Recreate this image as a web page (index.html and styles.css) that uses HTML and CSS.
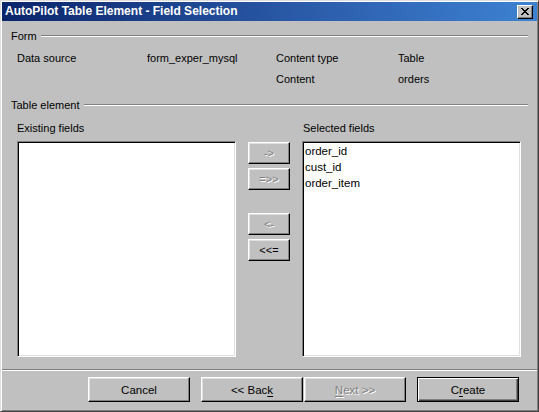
FILE: index.html
```html
<!DOCTYPE html>
<html>
<head>
<meta charset="utf-8">
<title>AutoPilot Table Element - Field Selection</title>
<link rel="stylesheet" href="styles.css">
</head>
<body>
<div class="window">
  <div class="titlebar">
    <span class="title">AutoPilot Table Element - Field Selection</span>
    <span class="close-btn">
      <svg width="8" height="7" viewBox="0 0 8 7"><path d="M0 0h2v1h-2zM6 0h2v1h-2zM1 1h2v1h-2zM5 1h2v1h-2zM2 2h4v1h-4zM3 3h2v1h-2zM2 4h4v1h-4zM1 5h2v1h-2zM5 5h2v1h-2zM0 6h2v1h-2zM6 6h2v1h-2z" fill="#000"/></svg>
    </span>
  </div>
  <div class="body">
    <div class="group-head"><span>Form</span><span class="rule"></span></div>
    <div class="info">
      <span>Data source</span><span>form_exper_mysql</span><span>Content type</span><span>Table</span>
      <span></span><span></span><span>Content</span><span>orders</span>
    </div>
    <div class="group-head group-head-2"><span>Table element</span><span class="rule"></span></div>
    <div class="fields">
      <span class="flabel">Existing fields</span>
      <span></span>
      <span class="flabel flabel-r">Selected fields</span>
      <div class="listbox"></div>
      <div class="movers">
        <div class="pair">
          <span class="btn small disabled">-&gt;</span>
          <span class="btn small disabled">=&gt;&gt;</span>
        </div>
        <div class="pair">
          <span class="btn small disabled">&lt;-</span>
          <span class="btn small">&lt;&lt;=</span>
        </div>
      </div>
      <div class="listbox">
        <div class="item">order_id</div>
        <div class="item">cust_id</div>
        <div class="item">order_item</div>
      </div>
    </div>
  </div>
  <div class="separator"></div>
  <div class="footer">
    <span class="btn big">Cancel</span>
    <span class="btn big back">&lt;&lt; Bac<u>k</u></span>
    <span class="btn big disabled"><u>N</u>ext &gt;&gt;</span>
    <span class="btn big default">C<u>r</u>eate</span>
  </div>
</div>
</body>
</html>
```
FILE: styles.css
```css
html, body {
  margin: 0;
  padding: 0;
}
body {
  width: 539px;
  height: 412px;
  background: #c0c0c0;
  font-family: "Liberation Sans", Arial, sans-serif;
  font-size: 11px;
  color: #000;
  overflow: hidden;
}
.window {
  box-sizing: border-box;
  width: 539px;
  height: 412px;
  border: 1px solid;
  border-color: #dfdfdf #404040 #404040 #dfdfdf;
  box-shadow: inset 1px 1px #fff, inset -1px -1px #808080;
  padding: 1px 1px 2px 1px;
  background: #c0c0c0;
  display: flex;
  flex-direction: column;
}
.titlebar {
  height: 19px;
  flex: none;
  display: flex;
  align-items: center;
  justify-content: space-between;
  padding: 0 4px 0 3px;
  background: linear-gradient(to right, #0a246a 0%, #2a5aa8 55%, #3d82d2 100%);
}
.title {
  color: #fff;
  font-weight: bold;
  font-size: 12px;
  line-height: 19px;
  white-space: nowrap;
}
.close-btn {
  box-sizing: border-box;
  width: 16px;
  height: 14px;
  display: flex;
  align-items: center;
  justify-content: center;
  background: #c0c0c0;
  border: 1px solid;
  border-color: #fff #000 #000 #fff;
  box-shadow: inset -1px -1px #808080;
  padding: 0 1px 1px 0;
}
.body {
  display: flex;
  flex-direction: column;
}
.group-head {
  display: flex;
  align-items: center;
  gap: 4px;
  height: 14px;
  line-height: 14px;
  margin: 8px 9px 0 9px;
  white-space: nowrap;
}
.group-head-2 {
  margin-top: 12px;
}
.rule {
  flex: 1;
  height: 0;
  border-top: 1px solid #808080;
  border-bottom: 1px solid #fff;
}
.info {
  display: grid;
  grid-template-columns: 130px 129px 122px 1fr;
  grid-auto-rows: 14px;
  row-gap: 7px;
  line-height: 14px;
  margin: 8px 0 0 15px;
  white-space: nowrap;
}
.fields {
  display: grid;
  grid-template-columns: 219px 42px 219px;
  grid-template-rows: 14px 216px;
  column-gap: 12px;
  row-gap: 6px;
  margin: 9px 0 0 15px;
  line-height: 14px;
}
.flabel-r {
  padding-left: 1px;
}
.listbox {
  box-sizing: border-box;
  background: #fff;
  border: 1px solid;
  border-color: #808080 #fff #fff #808080;
  box-shadow: inset 1px 1px #000, inset -1px -1px #dfdfdf;
  padding: 1px 2px 0 2px;
}
.item {
  font-size: 11.5px;
  line-height: 16px;
  white-space: nowrap;
}
.movers {
  display: flex;
  flex-direction: column;
  gap: 23px;
  padding-top: 1px;
}
.pair {
  display: flex;
  flex-direction: column;
  gap: 4px;
}
.btn {
  box-sizing: border-box;
  display: flex;
  align-items: center;
  justify-content: center;
  background: #c0c0c0;
  border: 1px solid;
  border-color: #fff #000 #000 #fff;
  box-shadow: inset -1px -1px #808080, inset 1px 1px #dfdfdf;
  white-space: nowrap;
}
.btn.small {
  width: 42px;
  height: 22px;
}
.btn.disabled {
  color: #808080;
  text-shadow: 1px 1px 0 #fff;
}
.separator {
  flex: none;
  margin-top: 12px;
  height: 0;
  border-top: 1px solid #808080;
  border-bottom: 1px solid #fff;
}
.footer {
  display: flex;
  margin: 6px 0 0 86px;
}
.btn.big {
  width: 102px;
  height: 25px;
  font-size: 11.5px;
}
.btn.back {
  margin-left: 11px;
  margin-right: 1px;
}
.btn.default {
  margin-left: 11px;
  border-color: #000;
  box-shadow: inset 1px 1px #fff, inset -1px -1px #404040, inset -2px -2px #808080;
}
u {
  text-decoration: underline;
  text-underline-offset: 2px;
}
```
